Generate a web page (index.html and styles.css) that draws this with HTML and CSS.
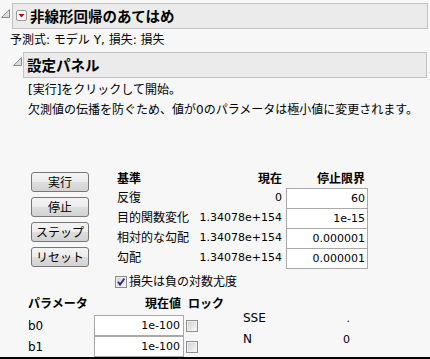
FILE: index.html
```html
<!DOCTYPE html>
<html lang="ja">
<head>
    <meta charset="UTF-8">
    <meta name="viewport" content="width=device-width, initial-scale=1.0">
    <title>非線形回帰のあてはめ</title>
    <link rel="stylesheet" href="styles.css">
</head>
<body>
    <div class="window">
        <div class="outline main">
            <svg class="disclose" width="9" height="9" viewBox="0 0 9 9"><path d="M8.5 0.5V8.5H0.5Z" fill="#dcdcdc" stroke="#8c8c8c"/></svg>
            <div class="bar">
                <svg class="menu-icon" width="11" height="11" viewBox="0 0 11 11"><rect x="0.5" y="0.5" width="10" height="10" rx="1.5" fill="#fbfbfb" stroke="#9a9a9a"/><path d="M2.5 4H8.5L5.5 7.5Z" fill="#d40000"/></svg>
                <span class="title">非線形回帰のあてはめ</span>
            </div>
        </div>
        <div class="formula">予測式: モデル Y, 損失: 損失</div>

        <div class="outline sub">
            <svg class="disclose" width="9" height="9" viewBox="0 0 9 9"><path d="M8.5 0.5V8.5H0.5Z" fill="#dcdcdc" stroke="#8c8c8c"/></svg>
            <div class="bar">
                <span class="title">設定パネル</span>
            </div>
        </div>

        <div class="panel">
            <p class="note">[実行]をクリックして開始。</p>
            <p class="note">欠測値の伝播を防ぐため、値が0のパラメータは極小値に変更されます。</p>

            <div class="controls">
                <div class="buttons">
                    <button>実行</button>
                    <button>停止</button>
                    <button>ステップ</button>
                    <button>リセット</button>
                </div>
                <div class="criteria">
                    <div class="head">基準</div>
                    <div class="head right">現在</div>
                    <div class="head right pad">停止限界</div>

                    <div>反復</div>
                    <div class="num right">0</div>
                    <div class="limit num">60</div>

                    <div>目的関数変化</div>
                    <div class="num right">1.34078e+154</div>
                    <div class="limit num">1e-15</div>

                    <div>相対的な勾配</div>
                    <div class="num right">1.34078e+154</div>
                    <div class="limit num">0.000001</div>

                    <div>勾配</div>
                    <div class="num right">1.34078e+154</div>
                    <div class="limit num last">0.000001</div>
                </div>
            </div>

            <label class="check">
                <svg width="12" height="12" viewBox="0 0 12 12">
                    <defs><linearGradient id="cg" x1="0" y1="0" x2="1" y2="1"><stop offset="0" stop-color="#d2d2d2"/><stop offset="1" stop-color="#fafafa"/></linearGradient></defs>
                    <rect x="0.5" y="0.5" width="11" height="11" fill="#f2f2f2" stroke="#8a8a8a"/>
                    <rect x="2" y="2" width="8" height="8" fill="url(#cg)"/>
                    <path d="M3 5.8L5 8.6L9.4 2.6" fill="none" stroke="#2a2a8a" stroke-width="1.8"/>
                </svg>
                <span>損失は負の対数尤度</span>
            </label>

            <div class="params">
                <div class="param-grid">
                    <div class="head">パラメータ</div>
                    <div class="head right pad">現在値</div>
                    <div class="head lock-head">ロック</div>

                    <div>b0</div>
                    <div class="value num">1e-100</div>
                    <div><span class="lock"></span></div>

                    <div>b1</div>
                    <div class="value num">1e-100</div>
                    <div><span class="lock"></span></div>
                </div>
                <div class="stats">
                    <div>SSE</div>
                    <div class="num right">.</div>
                    <div>N</div>
                    <div class="num right">0</div>
                </div>
            </div>
        </div>
    </div>
</body>
</html>
```

FILE: styles.css
```css
body {
    margin: 0;
    font-family: "DejaVu Sans", "Noto Sans CJK JP", sans-serif;
    font-size: 12px;
    color: #000;
    background-color: #f7f7f7;
}
.window {
    min-height: 100vh;
    box-sizing: border-box;
    padding-top: 3px;
    border-bottom: 2px solid #000;
}
.outline {
    display: flex;
    align-items: flex-start;
}
.outline.main .disclose {
    margin: 6px 0 0 1px;
}
.outline.main .bar {
    margin: 0 2px 0 2px;
}
.outline.sub {
    margin-top: 2px;
}
.outline.sub .disclose {
    margin: 5px 0 0 13px;
}
.outline.sub .bar {
    margin: 0 3px 0 1px;
}
.bar {
    flex: 1;
    height: 26px;
    box-sizing: border-box;
    display: flex;
    align-items: center;
    padding-left: 3px;
    background: #ebebeb;
    border: 1px solid #c2c2c2;
}
.menu-icon {
    margin-right: 3px;
    margin-top: -1px;
}
.title {
    font-family: "Noto Sans CJK JP", sans-serif;
    font-weight: bold;
    font-size: 14.5px;
    line-height: 1;
}
.formula {
    margin: 1px 0 0 10px;
    line-height: 20px;
}
.panel {
    padding-left: 28px;
    margin-top: 2px;
}
.note {
    margin: 0;
    line-height: 20px;
}

/* 実行ボタンと停止条件 */
.controls {
    display: flex;
    margin-top: 48px;
}
.buttons {
    display: flex;
    flex-direction: column;
    gap: 5px;
    margin: 4px 0 0 3px;
}
button {
    width: 58px;
    height: 20px;
    padding: 0;
    font-family: "Noto Sans CJK JP", sans-serif;
    font-size: 12px;
    line-height: 18px;
    color: #000;
    border: 1px solid #777;
    border-radius: 3px;
    background: linear-gradient(#f4f4f4, #ececec 50%, #dedede 50%, #d2d2d2);
}
.criteria {
    display: grid;
    grid-template-columns: 74px 87px 82px;
    column-gap: 4px;
    grid-auto-rows: 20px;
    margin-left: 28px;
    line-height: 20px;
}
.head {
    font-family: "Noto Sans CJK JP", sans-serif;
    font-weight: bold;
}
.right {
    text-align: right;
}
.pad {
    padding-right: 3px;
}
.num {
    font-size: 11px;
}
.limit {
    height: 21px;
    box-sizing: border-box;
    background: #fff;
    border: 1px solid #a9a9a9;
    text-align: right;
    padding-right: 2px;
    line-height: 19px;
}

.check {
    display: flex;
    align-items: center;
    gap: 2px;
    margin: 4px 0 0 87px;
    line-height: 20px;
}
.check svg {
    display: block;
}

/* パラメータ */
.params {
    display: flex;
    margin-top: 1px;
}
.param-grid {
    display: grid;
    grid-template-columns: 66px 90px 44px;
    grid-template-rows: 22px 21px 21px;
    align-items: center;
    line-height: 20px;
}
.param-grid .head {
    align-self: start;
}
.lock-head {
    padding-left: 4px;
}
.value {
    height: 21px;
    box-sizing: border-box;
    background: #fff;
    border: 1px solid #a9a9a9;
    text-align: right;
    padding-right: 3px;
    line-height: 19px;
}
.param-grid .value + .value {
    margin-top: -1px;
}
.lock {
    display: block;
    width: 12px;
    height: 12px;
    box-sizing: border-box;
    margin-left: 2px;
    border: 1px solid #8e8e8e;
    box-shadow: inset 0 0 0 1px #f0f0f0;
    background: linear-gradient(135deg, #cdcdcd, #fbfbfb);
}
.stats {
    display: grid;
    grid-template-columns: 60px 47px;
    grid-auto-rows: 21px;
    align-items: center;
    margin: 15px 0 0 15px;
    line-height: 21px;
}
```
